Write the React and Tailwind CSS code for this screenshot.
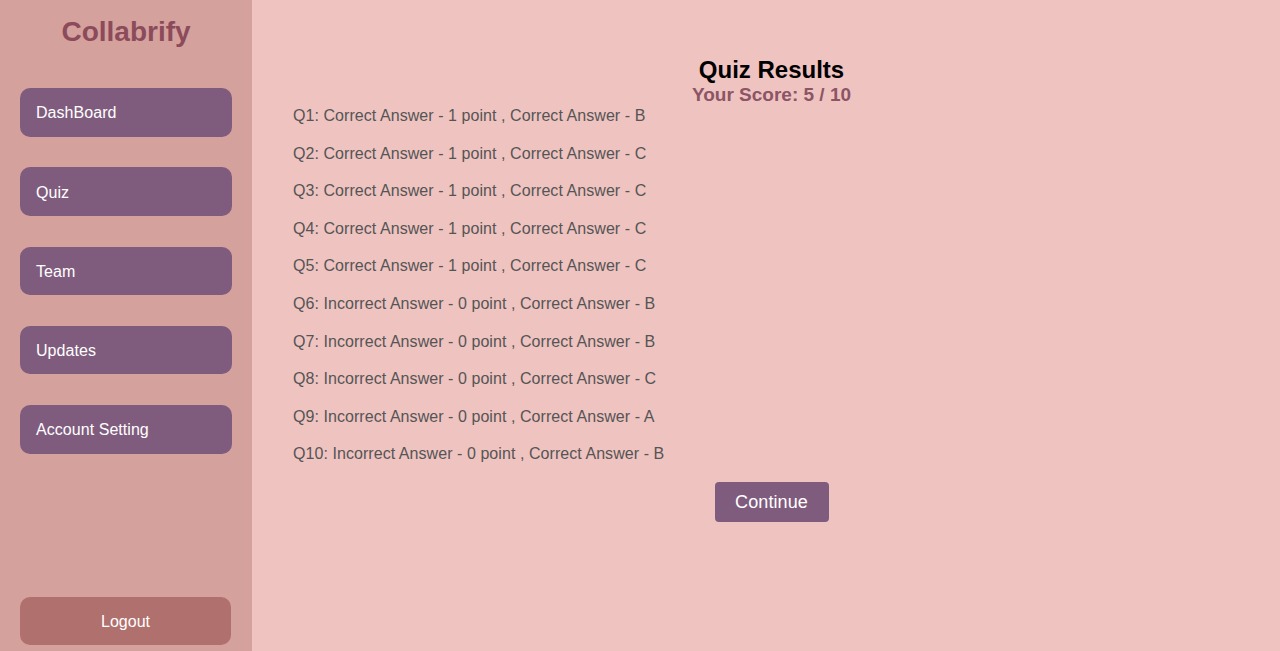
const navItems = ["DashBoard", "Quiz", "Team", "Updates", "Account Setting"]

const results = [
  "Q1: Correct Answer - 1 point , Correct Answer - B",
  "Q2: Correct Answer - 1 point , Correct Answer - C",
  "Q3: Correct Answer - 1 point , Correct Answer - C",
  "Q4: Correct Answer - 1 point , Correct Answer - C",
  "Q5: Correct Answer - 1 point , Correct Answer - C",
  "Q6: Incorrect Answer - 0 point , Correct Answer - B",
  "Q7: Incorrect Answer - 0 point , Correct Answer - B",
  "Q8: Incorrect Answer - 0 point , Correct Answer - C",
  "Q9: Incorrect Answer - 0 point , Correct Answer - A",
  "Q10: Incorrect Answer - 0 point , Correct Answer - B",
]

const Sidebar = () => {
  return (
    <aside className="w-[252px] shrink-0 h-full bg-[#d5a19d] flex flex-col px-5 pb-[6px]">
      <h1 className="text-[28px] leading-[32px] font-bold text-[#8b4b5b] text-center mt-[16px]">
        Collabrify
      </h1>
      <nav className="flex flex-col gap-[30.75px] mt-[40px]">
        {navItems.map((item) => (
          <button
            key={item}
            className="h-[48.5px] w-[212px] rounded-[10px] bg-[#7f5c7e] text-white text-left pl-[16px] pt-[2px] text-[16px] tracking-[0.05px]"
          >
            {item}
          </button>
        ))}
      </nav>
      <button className="mt-auto h-[48.5px] w-[211px] rounded-[10px] bg-[#b0706d] text-white text-[16px] pt-[2px]">
        Logout
      </button>
    </aside>
  )
}

const QuizResults = () => {
  return (
    <main className="flex-1 h-full bg-[#efc3c0] pl-[41px] pr-[30px] pt-[56px]">
      <h2 className="text-[24px] leading-[28px] font-bold text-black text-center">Quiz Results</h2>
      <p className="text-[19px] leading-[22px] font-bold text-[#8b5566] text-center">
        Your Score: 5 / 10
      </p>
      <ul className="flex flex-col gap-[19.6px] mt-[1px]">
        {results.map((line) => (
          <li key={line} className="text-[16px] leading-[18px] text-[#555] tracking-[0.06px]">
            {line}
          </li>
        ))}
      </ul>
      <div className="flex justify-center mt-[19px]">
        <button className="h-[40px] w-[114px] rounded-[4px] bg-[#7f5c7e] text-white text-[18px] tracking-[0.1px]">
          Continue
        </button>
      </div>
    </main>
  )
}

export default function App() {
  return (
    <div className="flex w-full h-[651px] overflow-hidden font-['Liberation_Sans',Arial,sans-serif]">
      <Sidebar />
      <QuizResults />
    </div>
  )
}
